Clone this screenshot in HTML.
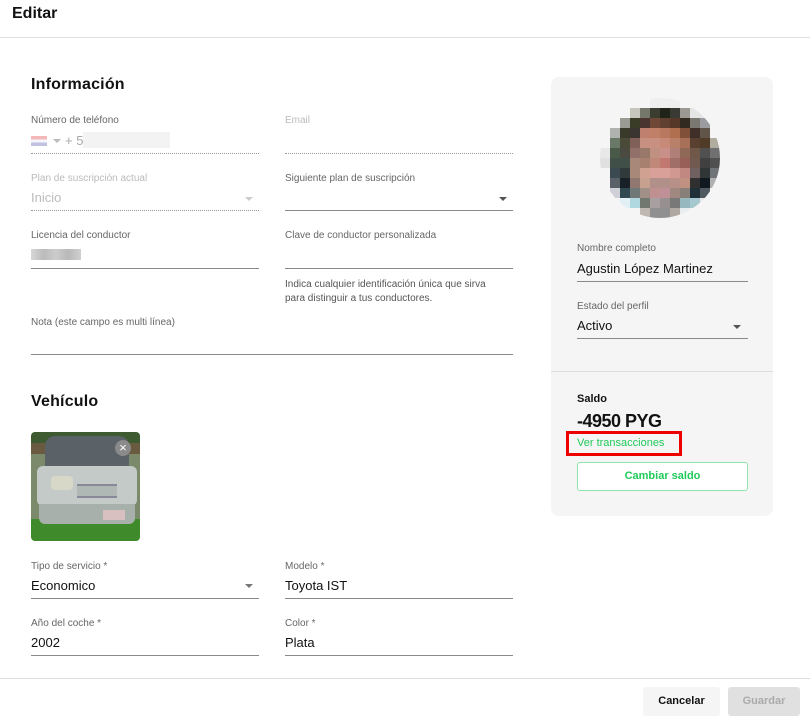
<!DOCTYPE html>
<html><head><meta charset="utf-8"><style>
*{margin:0;padding:0;box-sizing:border-box}
body{width:810px;height:724px;background:#fff;font-family:"Liberation Sans",sans-serif;position:relative;overflow:hidden;color:#111}
.a{position:absolute;white-space:nowrap}
.lab{font-size:10px;color:#666}
.dis{color:#bbb}
.val{font-size:13px;color:#111}
.ln{position:absolute;height:1px;background:#8a8a8a}
.dot{position:absolute;height:0;border-top:1px dotted #999}
.arr{position:absolute;width:0;height:0;border-left:4px solid transparent;border-right:4px solid transparent;border-top:4px solid #777}
h2{position:absolute;font-size:16px;font-weight:bold;letter-spacing:.2px}
</style></head><body>
<div class="a" style="left:12px;top:5px;font-size:16px;font-weight:bold">Editar</div>
<div class="ln" style="left:0;top:37px;width:810px;background:#e0e0e0"></div>

<h2 style="left:31px;top:76px">Información</h2>
<div class="a lab" style="left:31px;top:115px">Número de teléfono</div>
<div class="a" style="left:31px;top:136px;width:16px;height:10px;background:linear-gradient(#e88 0 33%,#eef 33% 66%,#99c 66%);opacity:.6"></div>
<div class="arr" style="left:53px;top:139px;border-top-color:#bbb;border-width:4px 4px 0"></div>
<div class="a" style="left:65px;top:133px;font-size:13px;color:#aaa">+ 5</div>
<div class="a" style="left:83px;top:132px;width:87px;height:16px;background:#f3f3f3"></div>
<div class="dot" style="left:31px;top:153px;width:228px"></div>
<div class="a lab dis" style="left:285px;top:115px">Email</div>
<div class="dot" style="left:285px;top:153px;width:228px"></div>

<div class="a lab dis" style="left:31px;top:173px">Plan de suscripción actual</div>
<div class="a val" style="left:31px;top:190px;color:#bbb">Inicio</div>
<div class="arr" style="left:245px;top:197px;border-top-color:#ccc"></div>
<div class="dot" style="left:31px;top:210px;width:228px"></div>
<div class="a lab" style="left:285px;top:173px">Siguiente plan de suscripción</div>
<div class="arr" style="left:499px;top:197px;border-top-color:#555"></div>
<div class="ln" style="left:285px;top:210px;width:228px"></div>

<div class="a lab" style="left:31px;top:230px">Licencia del conductor</div>
<div class="a" style="left:31px;top:249px;width:50px;height:11px;background:linear-gradient(90deg,#d8d8d8,#bbb,#ccc,#b8b8b8,#d0d0d0)"></div>
<div class="ln" style="left:31px;top:268px;width:228px"></div>
<div class="a lab" style="left:285px;top:230px">Clave de conductor personalizada</div>
<div class="ln" style="left:285px;top:268px;width:228px"></div>
<div class="a lab" style="left:285px;top:278px;line-height:14px;color:#555">Indica cualquier identificación única que sirva<br>para distinguir a tus conductores.</div>

<div class="a lab" style="left:31px;top:317px">Nota (este campo es multi línea)</div>
<div class="ln" style="left:31px;top:354px;width:482px"></div>

<h2 style="left:31px;top:393px">Vehículo</h2>
<div class="a" style="left:31px;top:432px;width:109px;height:109px;border-radius:4px;overflow:hidden;background:linear-gradient(#3e5a30 0 10%,#6a5a40 10% 20%,#7a8a6a 20% 80%,#3f8a2a 80%)">
<div class="a" style="left:14px;top:4px;width:84px;height:32px;background:#5a6268;border-radius:10px 10px 0 0"></div>
<div class="a" style="left:6px;top:34px;width:100px;height:40px;background:#c4cac8;border-radius:6px"></div>
<div class="a" style="left:8px;top:72px;width:96px;height:20px;background:#a8b0ac;border-radius:0 0 6px 6px"></div>
<div class="a" style="left:46px;top:52px;width:40px;height:14px;background:#b0b8b6;border-top:2px solid #889;border-bottom:2px solid #889"></div>
<div class="a" style="left:20px;top:44px;width:22px;height:14px;background:#d8d8c8;border-radius:4px"></div>
<div class="a" style="left:72px;top:78px;width:22px;height:10px;background:#d8c0c0"></div>
<div class="a" style="left:84px;top:8px;width:16px;height:16px;border-radius:50%;background:#8a8a8a;color:#fff;font-size:13px;text-align:center;line-height:16px">×</div>
</div>

<div class="a lab" style="left:31px;top:561px">Tipo de servicio *</div>
<div class="a val" style="left:31px;top:578px">Economico</div>
<div class="arr" style="left:245px;top:584px"></div>
<div class="ln" style="left:31px;top:598px;width:228px"></div>
<div class="a lab" style="left:285px;top:561px">Modelo *</div>
<div class="a val" style="left:285px;top:578px">Toyota IST</div>
<div class="ln" style="left:285px;top:598px;width:228px"></div>
<div class="a lab" style="left:31px;top:618px">Año del coche *</div>
<div class="a val" style="left:31px;top:635px">2002</div>
<div class="ln" style="left:31px;top:655px;width:228px"></div>
<div class="a lab" style="left:285px;top:618px">Color *</div>
<div class="a val" style="left:285px;top:635px">Plata</div>
<div class="ln" style="left:285px;top:655px;width:228px"></div>

<div class="a" style="left:551px;top:77px;width:222px;height:439px;background:#f5f5f5;border-radius:8px"></div>
<svg class="a" style="left:600px;top:98px" width="120" height="120" viewBox="0 0 120 120">
<defs><clipPath id="c"><circle cx="60" cy="60" r="60"/></clipPath></defs>
<g clip-path="url(#c)">
<rect width="120" height="120" fill="#f5f5f5"/>
<rect x="50" y="0" width="30" height="10" fill="#eee"/>
<rect x="30" y="10" width="10" height="10" fill="#c6c6bd"/><rect x="40" y="10" width="10" height="10" fill="#75776a"/><rect x="50" y="10" width="10" height="10" fill="#3b3d30"/><rect x="60" y="10" width="10" height="10" fill="#202418"/><rect x="70" y="10" width="10" height="10" fill="#383a33"/><rect x="80" y="10" width="10" height="10" fill="#9a9890"/><rect x="90" y="10" width="20" height="10" fill="#e5e5e5"/>
<rect x="20" y="20" width="10" height="10" fill="#9a9c93"/><rect x="30" y="20" width="10" height="10" fill="#3a3c28"/><rect x="40" y="20" width="10" height="10" fill="#4a3530"/><rect x="50" y="20" width="10" height="10" fill="#704838"/><rect x="60" y="20" width="10" height="10" fill="#604030"/><rect x="70" y="20" width="10" height="10" fill="#553828"/><rect x="80" y="20" width="10" height="10" fill="#302a20"/><rect x="90" y="20" width="10" height="10" fill="#7a7870"/><rect x="100" y="20" width="10" height="10" fill="#9a9ca0"/>
<rect x="10" y="30" width="10" height="10" fill="#b0b2b0"/><rect x="20" y="30" width="10" height="10" fill="#3a3a2a"/><rect x="30" y="30" width="10" height="10" fill="#3a3530"/><rect x="40" y="30" width="10" height="10" fill="#c08070"/><rect x="50" y="30" width="10" height="10" fill="#c08068"/><rect x="60" y="30" width="10" height="10" fill="#b87860"/><rect x="70" y="30" width="10" height="10" fill="#b07050"/><rect x="80" y="30" width="10" height="10" fill="#805038"/><rect x="90" y="30" width="10" height="10" fill="#402f28"/><rect x="100" y="30" width="10" height="10" fill="#605548"/>
<rect x="10" y="40" width="10" height="10" fill="#6a7868"/><rect x="20" y="40" width="10" height="10" fill="#4a4a38"/><rect x="30" y="40" width="10" height="10" fill="#806058"/><rect x="40" y="40" width="20" height="10" fill="#c89080"/><rect x="60" y="40" width="10" height="10" fill="#c88a78"/><rect x="70" y="40" width="10" height="10" fill="#b88068"/><rect x="80" y="40" width="10" height="10" fill="#a87058"/><rect x="90" y="40" width="10" height="10" fill="#5a4030"/><rect x="100" y="40" width="10" height="10" fill="#503a28"/><rect x="110" y="40" width="10" height="10" fill="#b0aca0"/>
<rect x="0" y="50" width="10" height="10" fill="#e8e8e8"/><rect x="10" y="50" width="10" height="10" fill="#4a5a48"/><rect x="20" y="50" width="10" height="10" fill="#4a4a40"/><rect x="30" y="50" width="10" height="10" fill="#907068"/><rect x="40" y="50" width="10" height="10" fill="#987868"/><rect x="50" y="50" width="10" height="10" fill="#c09080"/><rect x="60" y="50" width="10" height="10" fill="#c89088"/><rect x="70" y="50" width="10" height="10" fill="#b08078"/><rect x="80" y="50" width="10" height="10" fill="#906858"/><rect x="90" y="50" width="10" height="10" fill="#705848"/><rect x="100" y="50" width="10" height="10" fill="#505050"/><rect x="110" y="50" width="10" height="10" fill="#707070"/>
<rect x="0" y="60" width="10" height="10" fill="#e0e0e0"/><rect x="10" y="60" width="20" height="10" fill="#405048"/><rect x="30" y="60" width="10" height="10" fill="#a88878"/><rect x="40" y="60" width="10" height="10" fill="#a88070"/><rect x="50" y="60" width="10" height="10" fill="#c08878"/><rect x="60" y="60" width="10" height="10" fill="#c07870"/><rect x="70" y="60" width="10" height="10" fill="#a07068"/><rect x="80" y="60" width="10" height="10" fill="#985f58"/><rect x="90" y="60" width="10" height="10" fill="#705a50"/><rect x="100" y="60" width="10" height="10" fill="#404040"/><rect x="110" y="60" width="10" height="10" fill="#505050"/>
<rect x="10" y="70" width="10" height="10" fill="#3a4a50"/><rect x="20" y="70" width="10" height="10" fill="#303a3a"/><rect x="30" y="70" width="10" height="10" fill="#a88878"/><rect x="40" y="70" width="10" height="10" fill="#d0a090"/><rect x="50" y="70" width="20" height="10" fill="#d8a098"/><rect x="70" y="70" width="10" height="10" fill="#d09890"/><rect x="80" y="70" width="10" height="10" fill="#c08880"/><rect x="90" y="70" width="10" height="10" fill="#706060"/><rect x="100" y="70" width="10" height="10" fill="#303535"/><rect x="110" y="70" width="10" height="10" fill="#707478"/>
<rect x="10" y="80" width="10" height="10" fill="#5a6068"/><rect x="20" y="80" width="10" height="10" fill="#182028"/><rect x="30" y="80" width="10" height="10" fill="#907870"/><rect x="40" y="80" width="10" height="10" fill="#c8a090"/><rect x="50" y="80" width="20" height="10" fill="#b09088"/><rect x="70" y="80" width="10" height="10" fill="#b89088"/><rect x="80" y="80" width="10" height="10" fill="#c09080"/><rect x="90" y="80" width="10" height="10" fill="#303030"/><rect x="100" y="80" width="10" height="10" fill="#101820"/><rect x="110" y="80" width="10" height="10" fill="#b0b0b0"/>
<rect x="10" y="90" width="10" height="10" fill="#d0d0d8"/><rect x="20" y="90" width="10" height="10" fill="#304850"/><rect x="30" y="90" width="10" height="10" fill="#707878"/><rect x="40" y="90" width="10" height="10" fill="#a09088"/><rect x="50" y="90" width="10" height="10" fill="#c09090"/><rect x="60" y="90" width="10" height="10" fill="#c09098"/><rect x="70" y="90" width="10" height="10" fill="#a08880"/><rect x="80" y="90" width="10" height="10" fill="#888078"/><rect x="90" y="90" width="10" height="10" fill="#203038"/><rect x="100" y="90" width="10" height="10" fill="#505860"/>
<rect x="20" y="100" width="10" height="10" fill="#e0f0f5"/><rect x="30" y="100" width="10" height="10" fill="#b0d8e0"/><rect x="40" y="100" width="10" height="10" fill="#707870"/><rect x="50" y="100" width="10" height="10" fill="#a8a0a0"/><rect x="60" y="100" width="10" height="10" fill="#989090"/><rect x="70" y="100" width="10" height="10" fill="#787878"/><rect x="80" y="100" width="10" height="10" fill="#98b8c0"/><rect x="90" y="100" width="10" height="10" fill="#a8c8d0"/><rect x="100" y="100" width="10" height="10" fill="#e8e8e8"/>
<rect x="40" y="110" width="10" height="10" fill="#c0b8b0"/><rect x="50" y="110" width="20" height="10" fill="#909090"/><rect x="70" y="110" width="10" height="10" fill="#b0a8a0"/><rect x="80" y="110" width="10" height="10" fill="#e8eef0"/>
</g></svg>

<div class="a lab" style="left:577px;top:243px">Nombre completo</div>
<div class="a val" style="left:577px;top:261px">Agustin López Martinez</div>
<div class="ln" style="left:577px;top:281px;width:171px"></div>
<div class="a lab" style="left:577px;top:301px">Estado del perfil</div>
<div class="a val" style="left:577px;top:318px">Activo</div>
<div class="arr" style="left:733px;top:325px;border-top-color:#555"></div>
<div class="ln" style="left:577px;top:338px;width:171px"></div>
<div class="ln" style="left:551px;top:371px;width:222px;background:#ddd"></div>

<div class="a" style="left:577px;top:393px;font-size:11px;font-weight:bold">Saldo</div>
<div class="a" style="left:577px;top:411px;font-size:18px;font-weight:bold;letter-spacing:-.5px">-4950 PYG</div>
<div class="a" style="left:566px;top:431px;width:116px;height:25px;border:3px solid #e00"></div>
<div class="a" style="left:577px;top:437px;font-size:11px;color:#1ecb5a">Ver transacciones</div>
<div class="a" style="left:577px;top:462px;width:171px;height:29px;border:1px solid #8fe3ad;border-radius:3px;background:#fff;font-size:11px;font-weight:bold;color:#1ecb5a;text-align:center;line-height:27px">Cambiar saldo</div>

<div class="a" style="left:0;top:678px;width:810px;height:46px;background:#fff;border-top:1px solid #ddd"></div>
<div class="a" style="left:643px;top:687px;width:77px;height:29px;background:#f5f5f5;border-radius:3px;font-size:11px;font-weight:bold;text-align:center;line-height:29px">Cancelar</div>
<div class="a" style="left:728px;top:687px;width:72px;height:29px;background:#e0e0e0;border-radius:3px;font-size:11px;font-weight:bold;color:#aaa;text-align:center;line-height:29px">Guardar</div>
</body></html>
